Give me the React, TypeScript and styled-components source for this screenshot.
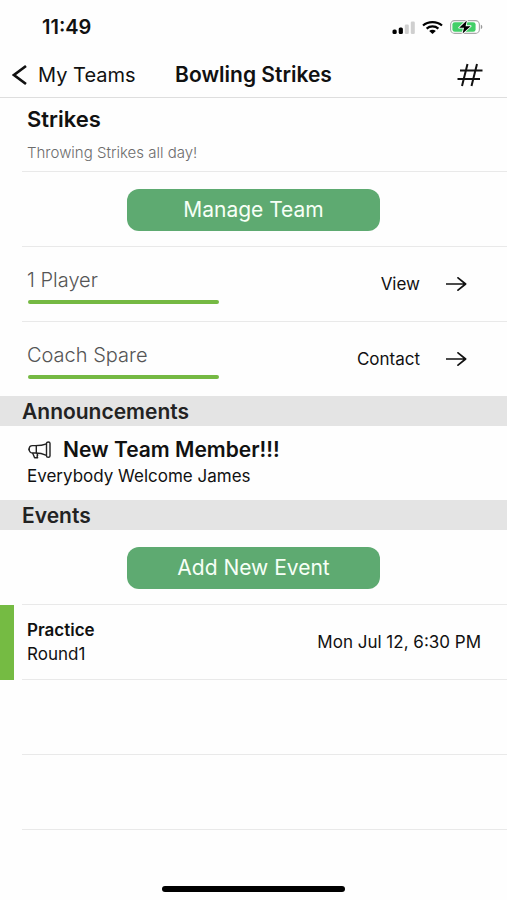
import React from "react";
import styled, { createGlobalStyle } from "styled-components";

const GlobalStyle = createGlobalStyle`
  *, *::before, *::after { box-sizing: border-box; }
  body {
    margin: 0;
    background: #fefefe;
    color: #111;
    font-family: Inter, "Liberation Sans", sans-serif;
  }
  h1, h2, h3, p { margin: 0; }
`;

const Screen = styled.div`
  display: flex;
  flex-direction: column;
  min-height: 100vh;
`;

const StatusBar = styled.div`
  display: flex;
  align-items: center;
  justify-content: space-between;
  height: 54px;
  padding: 0 24px 0 42px;
`;

const Clock = styled.time`
  font-size: 20px;
  font-weight: 600;
  line-height: 24px;
`;

const StatusIcons = styled.div`
  display: flex;
  align-items: center;
  gap: 7px;
`;

const NavBar = styled.header`
  display: grid;
  grid-template-columns: 1fr auto 1fr;
  align-items: center;
  height: 44px;
  padding: 0 12px 2px;
  border-bottom: 1px solid #dedede;
`;

const BackLink = styled.a`
  display: flex;
  align-items: center;
  gap: 10px;
  color: #111;
  font-size: 20px;
  line-height: 24px;
  text-decoration: none;
  white-space: nowrap;
`;

const NavTitle = styled.h1`
  font-size: 21px;
  font-weight: 600;
  line-height: 24px;
`;

const IconButton = styled.button`
  display: flex;
  justify-self: end;
  padding: 0 12px;
  border: 0;
  background: none;
  color: #111;
  cursor: pointer;
`;

const Row = styled.div<{ $last?: boolean }>`
  display: flex;
  align-items: center;
  justify-content: space-between;
  height: ${(p) => (p.$last ? 74 : 75)}px;
  margin-left: 22px;
  padding: 0 26px 0 5px;
  border-bottom: ${(p) => (p.$last ? "0" : "1px solid #e9e9e9")};
`;

const StackedRow = styled(Row)`
  flex-direction: column;
  align-items: flex-start;
  justify-content: center;
`;

const TeamRow = styled(StackedRow)`
  height: 74px;
  gap: 12px;
`;

const AnnouncementRow = styled(StackedRow)`
  padding-bottom: 3px;
`;

const ActionRow = styled(Row)`
  justify-content: center;
  padding: 1px 22px 0 0;
`;

const TeamName = styled.h2`
  font-size: 22px;
  font-weight: 600;
  line-height: 24px;
`;

const TeamNote = styled.p`
  color: #6c6c6c;
  font-size: 15px;
  font-weight: 300;
  line-height: 20px;
`;

const PrimaryButton = styled.button`
  width: 50vw;
  height: 42px;
  padding: 0;
  border: 0;
  border-radius: 12px;
  background: #5eaa71;
  color: #f6fff6;
  font-family: inherit;
  font-size: 21px;
  line-height: 24px;
  cursor: pointer;
`;

const Member = styled.div`
  display: flex;
  flex-direction: column;
  gap: 8px;
  width: 192px;
  padding-top: 3px;
`;

const MemberName = styled.span`
  color: #555;
  font-size: 20px;
  font-weight: 300;
  line-height: 24px;
`;

const Underline = styled.span`
  height: 4px;
  margin-left: 1px;
  border-radius: 2px;
  background: #75b943;
`;

const RowLink = styled.a`
  display: flex;
  align-items: center;
  gap: 26px;
  margin-right: 14px;
  color: #111;
  font-size: 17px;
  line-height: 20px;
  text-decoration: none;
`;

const SectionTitle = styled.h2`
  height: 30px;
  padding: 1px 0 0 22px;
  background: #e4e4e4;
  color: #222;
  font-size: 21px;
  font-weight: 600;
  line-height: 29px;
`;

const AnnouncementTitle = styled.h3`
  display: flex;
  align-items: center;
  gap: 12px;
  font-size: 21px;
  font-weight: 600;
  line-height: 28px;
`;

const BodyText = styled.p`
  font-size: 17px;
  line-height: 24px;
`;

const EventItem = styled.div`
  position: relative;
`;

const EventMarker = styled.span`
  position: absolute;
  inset: 0 auto 0 0;
  width: 14px;
  background: #75bb43;
`;

const EventName = styled.h3`
  font-size: 17px;
  font-weight: 600;
  line-height: 24px;
`;

const EventTime = styled.time`
  font-size: 17px;
  line-height: 24px;
`;

const HomeArea = styled.footer`
  display: flex;
  justify-content: center;
  margin-top: auto;
  padding-bottom: 8px;
`;

const HomeIndicator = styled.span`
  width: 36%;
  height: 6px;
  border-radius: 3px;
  background: #000;
`;

const SignalIcon = () => (
  <svg width="23" height="13" viewBox="0 0 23 13" aria-label="Signal" role="img">
    <rect x="0.5" y="8.5" width="4.2" height="4.5" rx="1.6" fill="#000" />
    <rect x="6.7" y="6.5" width="4.2" height="6.5" rx="1.5" fill="#000" />
    <rect x="12.8" y="3.5" width="4" height="9.5" rx="1.2" fill="#cfcfcf" />
    <rect x="18.8" y="0.5" width="4" height="12.5" rx="1.2" fill="#cfcfcf" />
  </svg>
);

const WifiIcon = () => (
  <svg width="21" height="13" viewBox="0 0 21 13" aria-label="Wi-Fi" role="img" fill="none" stroke="#000" strokeWidth="2.2">
    <path d="M1 4.5C6.2 0 14.8 0 20 4.5" />
    <path d="M4.6 7.6C8 4.7 13 4.7 16.4 7.6" />
    <path d="M7.2 9.9C9 8.5 12 8.5 13.8 9.9L10.5 13Z" fill="#000" stroke="none" />
  </svg>
);

const BatteryIcon = () => (
  <svg width="33" height="14" viewBox="0 0 33 14" aria-label="Battery charging" role="img">
    <rect x="0.6" y="0.6" width="28.8" height="12.8" rx="4" fill="#fff" stroke="#a8a8a8" strokeWidth="1.1" />
    <rect x="2.4" y="2.2" width="23.2" height="9.6" rx="2.4" fill="#43cf68" />
    <path d="M30.8 4.8C32.8 5.4 32.8 8.6 30.8 9.2Z" fill="#999" />
    <path d="M16.8 0.6L9.2 7.7H14L12.6 13.4L20.6 6.2H15.6Z" fill="#000" stroke="#fff" strokeWidth="1.8" paintOrder="stroke" strokeLinejoin="round" />
  </svg>
);

const BackIcon = () => (
  <svg width="16" height="22" viewBox="0 0 16 22" aria-hidden="true">
    <path d="M14 2L2 11L14 20" fill="none" stroke="currentColor" strokeWidth="2.7" />
  </svg>
);

const HashIcon = () => (
  <svg width="26" height="24" viewBox="0 0 26 24" aria-hidden="true" fill="none" stroke="currentColor" strokeWidth="2">
    <path d="M10.5 1L5 23M20 1L14.5 23M3 7.5H25.5M0.5 16H23" />
  </svg>
);

const ArrowIcon = () => (
  <svg width="21" height="14" viewBox="0 0 21 14" aria-hidden="true" fill="none" stroke="currentColor" strokeWidth="1.7">
    <path d="M0.5 7H19.5M12 0.8L19.6 7L12 13.2" strokeLinejoin="round" strokeLinecap="round" />
  </svg>
);

const MegaphoneIcon = () => (
  <svg width="24" height="18" viewBox="0 0 24 18" aria-hidden="true" fill="none" stroke="#222" strokeWidth="1.4" strokeLinejoin="round">
    <path d="M19.5 2.2C19.5 0.6 23 0.6 23 2.2V15C23 16.6 19.5 16.6 19.5 15Z" />
    <path d="M19.5 2.8C15.5 4.4 12 4.6 8.5 4.6H5.5C1 4.6 1 12 5.5 12H8.5C12 12 15.5 12.6 19.5 14.4" />
    <path d="M9.3 4.8V12M2 7.6V9.2M5.6 12L7.6 16.8H10.6L10 14.8C11.2 14.6 10.6 13.2 9.6 12.2" />
  </svg>
);

const members = [
  { name: "1 Player", action: "View" },
  { name: "Coach Spare", action: "Contact" },
];

export default function App() {
  return (
    <Screen>
      <GlobalStyle />
      <StatusBar>
        <Clock>11:49</Clock>
        <StatusIcons>
          <SignalIcon />
          <WifiIcon />
          <BatteryIcon />
        </StatusIcons>
      </StatusBar>
      <NavBar>
        <BackLink href="#teams">
          <BackIcon />
          My Teams
        </BackLink>
        <NavTitle>Bowling Strikes</NavTitle>
        <IconButton type="button" aria-label="Team channel">
          <HashIcon />
        </IconButton>
      </NavBar>
      <main>
        <TeamRow>
          <TeamName>Strikes</TeamName>
          <TeamNote>Throwing Strikes all day!</TeamNote>
        </TeamRow>
        <ActionRow>
          <PrimaryButton type="button">Manage Team</PrimaryButton>
        </ActionRow>
        {members.map((m, i) => (
          <Row key={m.name} $last={i === members.length - 1}>
            <Member>
              <MemberName>{m.name}</MemberName>
              <Underline />
            </Member>
            <RowLink href={`#${m.action.toLowerCase()}`}>
              {m.action}
              <ArrowIcon />
            </RowLink>
          </Row>
        ))}
        <SectionTitle>Announcements</SectionTitle>
        <AnnouncementRow $last>
          <AnnouncementTitle>
            <MegaphoneIcon />
            New Team Member!!!
          </AnnouncementTitle>
          <BodyText>Everybody Welcome James</BodyText>
        </AnnouncementRow>
        <SectionTitle>Events</SectionTitle>
        <ActionRow>
          <PrimaryButton type="button">Add New Event</PrimaryButton>
        </ActionRow>
        <EventItem>
          <EventMarker />
          <Row>
            <div>
              <EventName>Practice</EventName>
              <BodyText>Round1</BodyText>
            </div>
            <EventTime>Mon Jul 12, 6:30 PM</EventTime>
          </Row>
        </EventItem>
        <Row />
        <Row />
      </main>
      <HomeArea>
        <HomeIndicator />
      </HomeArea>
    </Screen>
  );
}
